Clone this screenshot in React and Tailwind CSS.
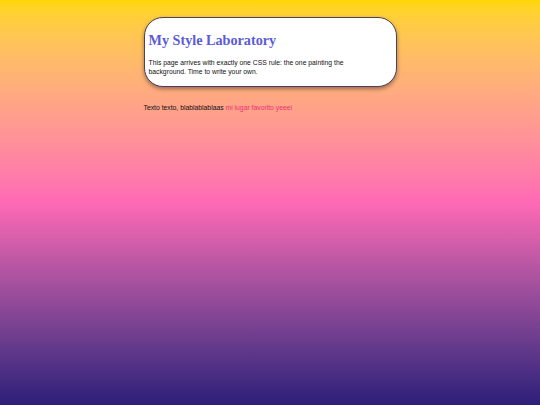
export default function App() {
  return (
    <div
      className="min-h-screen bg-linear-to-b from-[#ffd700] via-[#ff69b4] to-[#2e1e78] pt-[17px]"
      style={{ fontFamily: "'Liberation Sans', Arial, sans-serif" }}
    >
      <div className="w-[253px] mx-auto">
        {/* Card */}
        <div className="bg-white border-[1.5px] border-[#4f3f63] rounded-[19px] shadow-[0_2px_4px_rgba(0,0,0,0.4)] px-[4px] pt-[14px] pb-[10px]">
          <h1
            className="text-[14.2px] leading-[16px] font-bold text-[#5b5bd9]"
            style={{ fontFamily: "'Liberation Serif', 'Times New Roman', serif" }}
          >
            My Style Laboratory
          </h1>
          <p className="mt-[10px] max-w-[215px] text-[6.8px] leading-[9px] text-[#111]">
            This page arrives with exactly one CSS rule: the one painting the background. Time to write your own.
          </p>
        </div>

        <p className="mt-[16px] text-[6.8px] leading-[9px] text-[#111]">
          Texto texto, blablablablaas <span className="text-[#e8336f]">mi lugar favorito yeeei</span>
        </p>
      </div>
    </div>
  );
}
